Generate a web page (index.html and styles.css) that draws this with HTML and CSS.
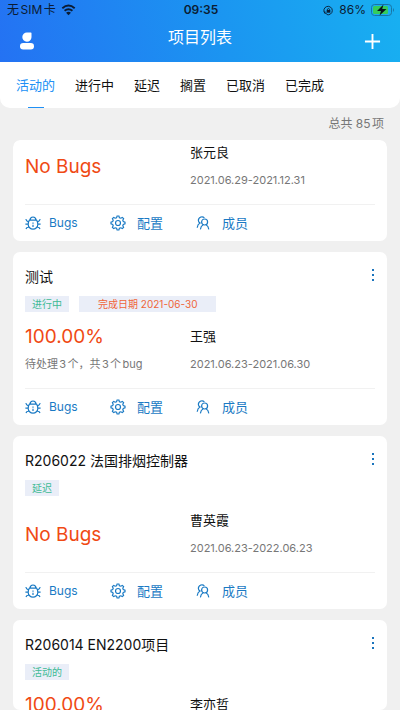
FILE: index.html
```html
<!DOCTYPE html>
<html lang="zh-CN">
<head>
<meta charset="utf-8">
<meta name="viewport" content="width=device-width, initial-scale=1">
<title>项目列表</title>
<link rel="stylesheet" href="styles.css">
</head>
<body>
<svg class="defs" aria-hidden="true">
  <symbol id="bug" viewBox="0 0 16 16"><path d="M4.4 5.2H11.6Q12.8 6.8 12.8 9.4A4.8 4.8 0 0 1 3.2 9.4Q3.2 6.8 4.4 5.2ZM5 5.2Q5.2 2 8 2Q10.8 2 11 5.2M.8 4.2Q1.4 6.2 3.6 6.8M15.2 4.2Q14.6 6.2 12.4 6.8M.4 9.2H3.2M15.6 9.2H12.8M1 14Q1.4 12.2 3.8 11.8M15 14Q14.6 12.2 12.2 11.8M8 7.4V8.8M8 9.8V12"/></symbol>
  <symbol id="gear" viewBox="0 0 16 16"><path d="M6.6 2.7L7.1 1H8.9L9.4 2.7L10.8 3.2L12.3 2.4L13.6 3.7L12.8 5.2L13.3 6.6L15 7.1V8.9L13.3 9.4L12.8 10.8L13.6 12.3L12.3 13.6L10.8 12.8L9.4 13.3L8.9 15H7.1L6.6 13.3L5.2 12.8L3.7 13.6L2.4 12.3L3.2 10.8L2.7 9.4L1 8.9V7.1L2.7 6.6L3.2 5.2L2.4 3.7L3.7 2.4L5.2 3.2Z"/><circle cx="8" cy="8" r="2.5"/></symbol>
  <symbol id="member" viewBox="0 0 16 16"><circle cx="9.6" cy="7" r="3"/><path d="M5.4 14.4Q5.8 11 8.2 9.8M11 9.8Q13.4 11 13.8 14.4M9.4 2.8Q8 1.4 5.8 2Q3.2 3 3.4 5.6Q3.6 7.2 5 8Q2.6 9.2 2.2 12.8"/></symbol>
</svg>
<header class="top">
  <div class="status">
    <span class="carrier">无SIM卡
      <svg class="wifi" viewBox="0 0 16 12"><path d="M1.4 4.2Q8-1.6 14.6 4.2M3.8 6.9Q8 3.4 12.2 6.9"/><path class="solid" d="M5.4 8.9Q8 6.9 10.6 8.9L8 11.6Z"/></svg>
    </span>
    <strong class="clock">09:35</strong>
    <span class="power">
      <svg class="lock" viewBox="0 0 12 12"><path d="M2 9A4.6 4.6 0 1 1 4 10.4M2 9V6.8M2 9H4.2"/><path class="solid" d="M4 5.4H8V8.4H4Z"/><path d="M4.8 5.4V4.6Q6 3 7.2 4.6V5.4"/></svg>
      <span>86%</span>
      <svg class="battery" viewBox="0 0 24 12"><rect class="shell" x=".5" y=".5" width="20" height="11" rx="3"/><rect class="level" x="2" y="2" width="15" height="8" rx="1.5"/><path class="nub" d="M22 4Q24 6 22 8Z"/><path class="bolt" d="M12.5 .5L6 7H10L8.5 11.5L15.5 5H11.2Z"/></svg>
    </span>
  </div>
  <div class="nav">
    <button class="icon-btn" aria-label="我的"><svg class="user" viewBox="0 0 16 18"><path d="M8 .5H11.8Q12.5 .5 12.5 1.2V5.2A4.6 4.6 0 1 1 8 .5Z"/><rect x="1" y="11" width="14" height="6.4" rx="3.2"/></svg></button>
    <h1>项目列表</h1>
    <button class="icon-btn end" aria-label="新增"><svg class="plus" viewBox="0 0 18 18"><path d="M9 1V17M1 9H17"/></svg></button>
  </div>
</header>
<nav class="tabs">
  <a class="active" href="#">活动的</a><a href="#">进行中</a><a href="#">延迟</a><a href="#">搁置</a><a href="#">已取消</a><a href="#">已完成</a>
</nav>
<p class="total">总共 85项</p>
<main class="list">
  <article class="card">
    <div class="body">
      <div class="result">No Bugs</div>
      <div class="owner"><span class="name">张元良</span><span class="small">2021.06.29-2021.12.31</span></div>
    </div>
    <footer class="actions">
      <button><svg><use href="#bug"/></svg>Bugs</button><button><svg><use href="#gear"/></svg>配置</button><button><svg><use href="#member"/></svg>成员</button>
    </footer>
  </article>
  <article class="card">
    <div class="head"><h2>测试</h2><button class="more" aria-label="更多"><i></i><i></i><i></i></button></div>
    <div class="tags"><span class="tag">进行中</span><span class="tag due">完成日期 2021-06-30</span></div>
    <div class="body">
      <div class="result rate">100.00%<span class="small">待处理3个，共3个bug</span></div>
      <div class="owner"><span class="name">王强</span><span class="small">2021.06.23-2021.06.30</span></div>
    </div>
    <footer class="actions">
      <button><svg><use href="#bug"/></svg>Bugs</button><button><svg><use href="#gear"/></svg>配置</button><button><svg><use href="#member"/></svg>成员</button>
    </footer>
  </article>
  <article class="card">
    <div class="head"><h2>R206022 法国排烟控制器</h2><button class="more" aria-label="更多"><i></i><i></i><i></i></button></div>
    <div class="tags"><span class="tag">延迟</span></div>
    <div class="body">
      <div class="result">No Bugs</div>
      <div class="owner"><span class="name">曹英霞</span><span class="small">2021.06.23-2022.06.23</span></div>
    </div>
    <footer class="actions">
      <button><svg><use href="#bug"/></svg>Bugs</button><button><svg><use href="#gear"/></svg>配置</button><button><svg><use href="#member"/></svg>成员</button>
    </footer>
  </article>
  <article class="card">
    <div class="head"><h2>R206014 EN2200项目</h2><button class="more" aria-label="更多"><i></i><i></i><i></i></button></div>
    <div class="tags"><span class="tag">活动的</span></div>
    <div class="body">
      <div class="result rate">100.00%</div>
      <div class="owner"><span class="name">李亦哲</span></div>
    </div>
  </article>
</main>
</body>
</html>
```
FILE: styles.css
```css
* { box-sizing: border-box; }
body {
  margin: 0;
  height: 100vh;
  display: flex;
  flex-direction: column;
  overflow: hidden;
  background: #f0f0f0;
  color: #111;
  font: 12px/16px Inter, "Noto Sans CJK SC", sans-serif;
}
button { border: 0; padding: 0; background: none; font: inherit; color: inherit; }
svg { display: block; fill: none; stroke: currentColor; }
h1, h2, p { margin: 0; }
.defs { position: absolute; width: 0; height: 0; }

.top { flex: none; background: linear-gradient(75deg, #2472f3, #1b95f1 55%, #18b0f1); }
.status {
  display: grid;
  grid-template-columns: 1fr auto 1fr;
  align-items: center;
  height: 20px;
  padding: 0 5px 0 7px;
  color: #0b1c33;
}
.carrier, .power { display: flex; align-items: center; gap: 5px; }
.carrier, .total, .small { text-autospace: normal; }
.power { justify-content: flex-end; }
.clock { font-weight: 600; }
.wifi { width: 15px; height: 12px; stroke-width: 2; }
.lock { width: 11px; height: 11px; stroke-width: 1; }
.solid { fill: currentColor; stroke: none; }
.battery { width: 24px; height: 12px; stroke: none; }
.battery .shell { stroke: #1875a5; }
.level { fill: #35cc5b; }
.nub { fill: #1875a5; }
.bolt { fill: #08151c; }
.nav {
  display: grid;
  grid-template-columns: 1fr auto 1fr;
  height: 42px;
  padding: 0 19px;
  color: #fff;
}
.nav h1 { font-size: 16px; line-height: 34px; font-weight: 400; }
.icon-btn { display: flex; align-items: center; height: 42px; }
.end { justify-content: flex-end; }
.user { width: 16px; height: 18px; fill: #fff; stroke: none; }
.plus { width: 17px; height: 17px; stroke-width: 2; }

.tabs {
  flex: none;
  display: flex;
  gap: 20px;
  height: 46px;
  padding: 0 16px;
  background: #fff;
  border-radius: 0 0 10px 10px;
}
.tabs a {
  display: flex;
  flex-direction: column;
  align-items: center;
  color: inherit;
  text-decoration: none;
  font-size: 13px;
  line-height: 46px;
}
.tabs .active { color: #2090f5; }
.tabs .active::after { content: ""; width: 16px; height: 1px; margin-top: -1px; background: #2090f5; }
.total { flex: none; padding: 8px 16px; text-align: right; color: #777; }

.list {
  flex: 1;
  min-height: 0;
  margin: 0 13px;
  border-radius: 7px;
  overflow: hidden;
  display: flex;
  flex-direction: column;
  gap: 11px;
}
.card { flex: none; padding: 0 12px; background: #fff; border-radius: 7px; }
.head { display: flex; justify-content: space-between; padding: 15px 1px 0 0; }
.head h2 { font-size: 14px; line-height: 20px; font-weight: 400; }
.more { display: flex; flex-direction: column; align-items: center; justify-content: center; gap: 3px; width: 2px; height: 16px; }
.more i { width: 2px; height: 2px; background: #1a74bd; }
.tags { display: flex; gap: 10px; padding: 9px 0 12px; }
.tag { padding: 0 7px; background: #eaeef8; color: #3dba95; font-size: 10px; line-height: 16px; }
.due { padding: 0 19px; color: #ef6539; }
.body {
  display: grid;
  grid-template-columns: 165px 1fr;
  height: 65px;
  border-bottom: 1px solid #f1f1f1;
}
.result { color: #f04a14; font-size: 19px; line-height: 26px; padding-top: 14px; }
.rate { padding-top: 0; }
.small { display: block; color: #777; font-size: 11px; line-height: 16px; }
.rate .small { margin-top: 6px; }
.name { display: block; line-height: 24px; font-size: 13px; margin-bottom: 8px; }
.actions { display: grid; grid-template-columns: 85px 85px 1fr; height: 36px; color: #1a7ac4; }
.actions button { display: flex; align-items: center; gap: 8px; font-size: 12px; }
.actions button + button { gap: 11px; font-size: 13px; }
.actions svg { width: 16px; height: 16px; stroke-width: 1.2; }
```
